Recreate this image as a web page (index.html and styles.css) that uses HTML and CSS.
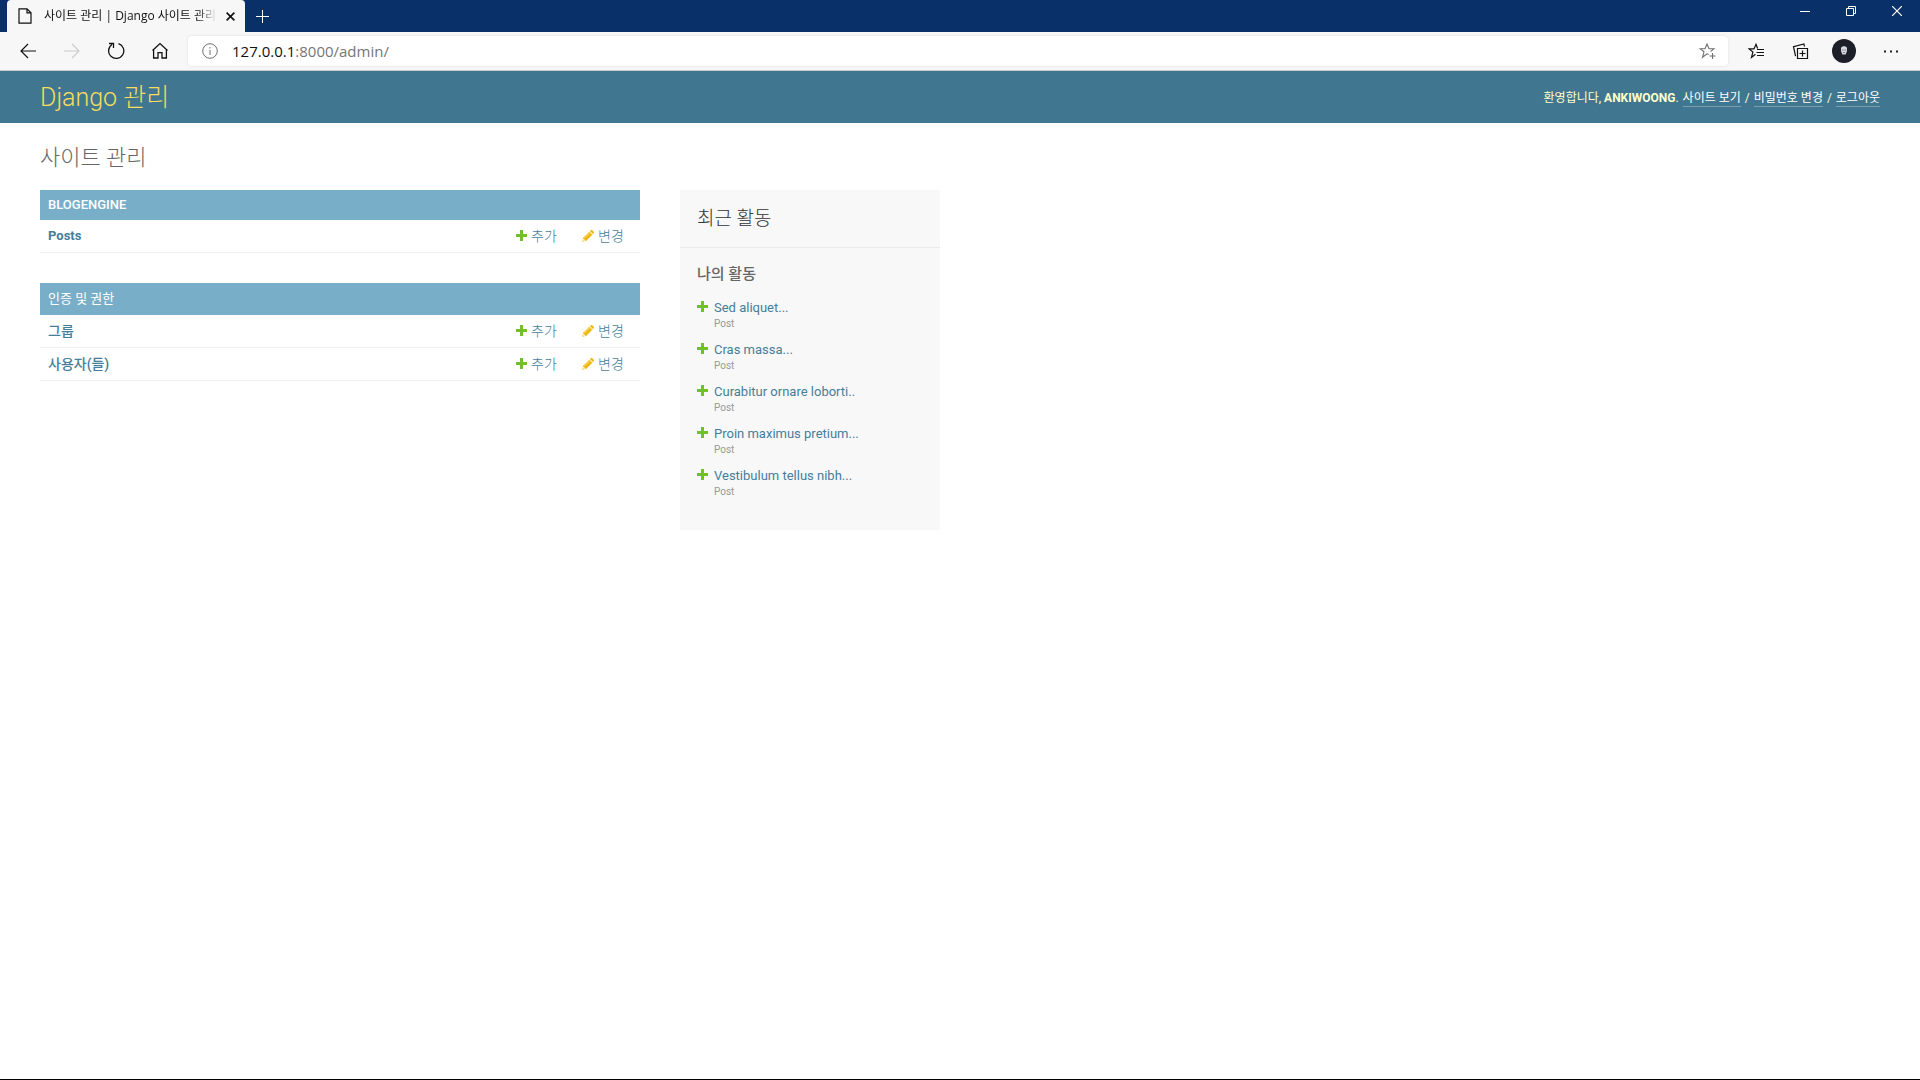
FILE: index.html
```html
<!DOCTYPE html>
<html lang="ko">
<head>
    <meta charset="UTF-8">
    <meta name="viewport" content="width=device-width, initial-scale=1.0">
    <title>사이트 관리 | Django 사이트 관리</title>
    <link rel="stylesheet" href="styles.css">
</head>
<body>
    <!-- icons used more than once -->
    <svg class="sprite" aria-hidden="true">
        <symbol id="icon-add" viewBox="0 0 11 11">
            <path fill="#70bf2b" d="M4 0h3v4h4v3H7v4H4V7H0V4h4z"/>
        </symbol>
        <symbol id="icon-change" viewBox="0 0 12 12">
            <path fill="#efb80b" d="M0.3 11.7l.9-4L7.5 1.4l3.1 3.1-6.3 6.3z"/>
            <path fill="#efb80b" d="M8.2.8C9-.1 10-.1 10.8.7l.6.6c.7.7.7 1.7-.1 2.4l-.3.3L7.9 1z"/>
            <path stroke="#fff" stroke-width=".7" d="M7.2 1.6l3.1 3.1"/>
            <path stroke="#fbe6a3" stroke-width="1" d="M2.4 7.9l4.7-4.7"/>
            <path fill="#fff" d="M1.4 8.600l2 2-1.600.4-.8-.8z"/>
        </symbol>
    </svg>

    <div class="browser">
        <div class="titlebar">
            <div class="tab">
                <svg class="tab-icon" width="14" height="16" viewBox="0 0 14 16" fill="none" stroke="#111" stroke-width="1.2"><path d="M1 .8h8l4 4v10.4H1zM9 .8v4h4"/></svg>
                <span class="tab-title">사이트 관리 | Django 사이트 관리</span>
                <button class="tab-close" aria-label="탭 닫기">
                    <svg width="9" height="9" viewBox="0 0 9 9" stroke="#111" stroke-width="1.6"><path d="M.6.6l7.8 7.8M8.4.6L.6 8.4"/></svg>
                </button>
            </div>
            <button class="new-tab" aria-label="새 탭">
                <svg width="13" height="13" viewBox="0 0 13 13" stroke="#fff"><path d="M6.5 0v13M0 6.5h13"/></svg>
            </button>
            <div class="window-controls">
                <button aria-label="최소화"><svg width="10" height="10" viewBox="0 0 10 10" stroke="#fff"><path d="M0 5.5h10"/></svg></button>
                <button aria-label="이전 크기로 복원"><svg width="10" height="10" viewBox="0 0 10 10" fill="none" stroke="#fff"><path d="M.5 2.5h7v7h-7zM2.5 2.5v-2h7v7h-2"/></svg></button>
                <button aria-label="닫기"><svg width="10" height="10" viewBox="0 0 10 10" stroke="#fff" stroke-width="1.2"><path d="M0 0l10 10M10 0L0 10"/></svg></button>
            </div>
        </div>

        <div class="toolbar">
            <button aria-label="뒤로"><svg width="18" height="18" viewBox="0 0 18 18" fill="none" stroke="#111" stroke-width="1.2"><path d="M17 9H2M9 2L2 9l7 7"/></svg></button>
            <button aria-label="앞으로" disabled><svg width="18" height="18" viewBox="0 0 18 18" fill="none" stroke="#ccc" stroke-width="1.2"><path d="M1 9h15M9 2l7 7-7 7"/></svg></button>
            <button aria-label="새로 고침"><svg width="18" height="18" viewBox="0 0 18 18" fill="none" stroke="#111" stroke-width="1.3"><path d="M11.5 1.6A7.6 7.6 0 1 1 5 2.500M2 1.500h4.500V6"/></svg></button>
            <button aria-label="홈"><svg width="18" height="18" viewBox="0 0 18 18" fill="none" stroke="#111" stroke-width="1.3"><path d="M2.6 7.5V16H7v-5.300h4V16h4.400V7.500M1.500 8.500L9 1.600l7.500 6.900"/></svg></button>

            <div class="address">
                <svg width="16" height="16" viewBox="0 0 16 16" fill="none" stroke="#707070"><circle cx="8" cy="8" r="7.3"/><path d="M8 7v5M8 4v1.5"/></svg>
                <label for="url">127.0.0.1</label>
                <input id="url" type="text" value=":8000/admin/">
                <button aria-label="즐겨찾기에 추가"><svg width="17" height="17" viewBox="0 0 17 17" fill="none" stroke="#707070" stroke-width="1.1"><path d="M9.7 11.600L8 10.800l-4.500 3.500 1.500-5.500L1 5.700h5L8 1l2 4.700h5l-3.500 3M13.500 10v6M10.500 13h6"/></svg></button>
            </div>

            <div class="tools">
                <button aria-label="즐겨찾기"><svg width="17" height="17" viewBox="0 0 17 17" fill="none" stroke="#111" stroke-width="1.2"><path d="M7.5 11.300L3.500 14.500 4.900 9 1 5.900h5L8 1.300l1.600 4.200M9 6.500h7M8.500 9.500H16M9 12.500h7"/></svg></button>
                <button aria-label="컬렉션"><svg width="17" height="17" viewBox="0 0 17 17" fill="none" stroke="#111" stroke-width="1.2"><path d="M5.500 5.500h10v10h-10zM10.500 7.500v6M7.500 10.500h6M12.500 3.500l-.6-2.500L1.500 3.600l2 9.500"/></svg></button>
                <button aria-label="프로필"><svg width="24" height="24" viewBox="0 0 24 24"><circle cx="12" cy="12" r="12" fill="#1c1f27"/><path fill="#d6d6dc" d="M9 9c.5-2.500 5.500-2.500 6 0v3l-1.300 3.500h-3.400L9 12z"/><path stroke="#777b85" d="M10 11h1.600M12.600 11h1.600M11 13.500h2"/></svg></button>
                <button aria-label="설정 및 기타"><svg width="14" height="3" viewBox="0 0 14 3" fill="#222"><path d="M0 .5h2v2H0zM6 .5h2v2H6zM12 .5h2v2h-2z"/></svg></button>
            </div>
        </div>
    </div>

    <header class="header">
        <a class="site-name" href="#">Django 관리</a>
        <div class="user-tools">
            환영합니다, <strong>ANKIWOONG</strong>.
            <a href="#">사이트 보기</a> /
            <a href="#">비밀번호 변경</a> /
            <a href="#">로그아웃</a>
        </div>
    </header>

    <main class="content">
        <h1>사이트 관리</h1>
        <div class="columns">
            <div class="app-list">
                <table class="module">
                    <caption><a href="#">BLOGENGINE</a></caption>
                    <tr>
                        <th scope="row"><a href="#">Posts</a></th>
                        <td><a href="#"><svg width="11" height="11"><use href="#icon-add"/></svg>추가</a></td>
                        <td><a href="#"><svg width="12" height="12"><use href="#icon-change"/></svg>변경</a></td>
                    </tr>
                </table>

                <table class="module auth">
                    <caption><a href="#">인증 및 권한</a></caption>
                    <tr>
                        <th scope="row"><a href="#">그룹</a></th>
                        <td><a href="#"><svg width="11" height="11"><use href="#icon-add"/></svg>추가</a></td>
                        <td><a href="#"><svg width="12" height="12"><use href="#icon-change"/></svg>변경</a></td>
                    </tr>
                    <tr>
                        <th scope="row"><a href="#">사용자(들)</a></th>
                        <td><a href="#"><svg width="11" height="11"><use href="#icon-add"/></svg>추가</a></td>
                        <td><a href="#"><svg width="12" height="12"><use href="#icon-change"/></svg>변경</a></td>
                    </tr>
                </table>
            </div>

            <aside class="recent">
                <h2>최근 활동</h2>
                <h3>나의 활동</h3>
                <ul>
                    <li><svg width="11" height="11"><use href="#icon-add"/></svg><a href="#">Sed aliquet...</a><small>Post</small></li>
                    <li><svg width="11" height="11"><use href="#icon-add"/></svg><a href="#">Cras massa...</a><small>Post</small></li>
                    <li><svg width="11" height="11"><use href="#icon-add"/></svg><a href="#">Curabitur ornare loborti..</a><small>Post</small></li>
                    <li><svg width="11" height="11"><use href="#icon-add"/></svg><a href="#">Proin maximus pretium...</a><small>Post</small></li>
                    <li><svg width="11" height="11"><use href="#icon-add"/></svg><a href="#">Vestibulum tellus nibh...</a><small>Post</small></li>
                </ul>
            </aside>
        </div>
    </main>
</body>
</html>
```

FILE: styles.css
```css
* {
    margin: 0;
    padding: 0;
    box-sizing: border-box;
}

body {
    display: flex;
    flex-direction: column;
    min-height: 100vh;
    background: #fff;
    border-bottom: 1px solid #000;
    color: #333;
    font-family: Roboto, "Noto Sans CJK KR", sans-serif;
    font-size: 13px;
    line-height: 20px;
}

a {
    color: #447e9b;
    text-decoration: none;
}

button {
    display: flex;
    align-items: center;
    justify-content: center;
    background: none;
    border: 0;
}

.sprite {
    position: absolute;
    width: 0;
    height: 0;
}

/* Browser frame */
.browser {
    font-family: "Open Sans", "Noto Sans CJK KR", sans-serif;
    border-bottom: 1px solid #ccc;
}

.titlebar {
    display: flex;
    height: 32px;
    padding-left: 7px;
    background: #0a3069;
}

.tab {
    display: flex;
    align-items: center;
    width: 238px;
    padding: 0 6px 0 11px;
    background: #f7f7f7;
    border-radius: 4px 4px 0 0;
}

.tab-title {
    flex: 1;
    margin-left: 12px;
    overflow: hidden;
    white-space: nowrap;
    font-size: 12px;
    color: #111;
    -webkit-mask-image: linear-gradient(to left, transparent, #000 20px);
    mask-image: linear-gradient(to left, transparent, #000 20px);
}

.tab-close {
    width: 18px;
    height: 18px;
    margin-left: 4px;
}

.new-tab {
    width: 35px;
}

.window-controls {
    display: flex;
    height: 22px;
    margin-left: auto;
}

.window-controls button {
    width: 46px;
}

.toolbar {
    display: flex;
    align-items: center;
    height: 38px;
    padding: 0 5px 0 6px;
    background: #f7f7f7;
}

.toolbar > button,
.tools button {
    width: 44px;
    height: 32px;
}

.address {
    display: flex;
    flex: 1;
    align-items: center;
    height: 30px;
    margin: 0 6px;
    padding: 0 12px 0 14px;
    background: #fff;
    border-radius: 4px;
    box-shadow: 0 0 3px rgba(0, 0, 0, 0.1);
    font-size: 15px;
}

.address label {
    margin-left: 14px;
    color: #111;
}

.address input {
    flex: 1;
    border: 0;
    outline: 0;
    background: none;
    color: #767676;
    font: inherit;
}

.tools {
    display: flex;
}

.tools button:last-child {
    width: 49px;
}

/* Header */
.header {
    display: flex;
    align-items: center;
    justify-content: space-between;
    height: 52px;
    padding: 2px 40px 0;
    background: #417690;
    color: #ffc;
}

.site-name {
    color: #f5dd5d;
    font-size: 25px;
    font-weight: 300;
    line-height: 28px;
}

.user-tools {
    font-size: 12px;
    line-height: 16px;
}

.user-tools a {
    display: inline-block;
    margin: 0 1px;
    border-bottom: 1px solid rgba(255, 255, 255, 0.3);
    color: #fff;
}

.user-tools a:last-child {
    margin-right: 0;
}

/* Content */
.content {
    padding: 20px 40px;
}

h1 {
    margin-bottom: 17px;
    color: #666;
    font-size: 22px;
    font-weight: 300;
    line-height: 30px;
}

.columns {
    display: flex;
    align-items: flex-start;
    gap: 40px;
}

.app-list {
    width: 600px;
}

.module {
    width: 100%;
    margin-bottom: 30px;
    border-spacing: 0;
}

.module caption {
    padding: 5px 8px;
    background: #79aec8;
    text-align: left;
    font-weight: 500;
}

.auth caption {
    padding: 6px 8px;
    font-weight: 400;
}

.module caption a {
    color: #fff;
}

.module th,
.module td {
    height: 33px;
    padding: 0 8px 1px;
    border-bottom: 1px solid #eee;
    text-align: left;
}

.module th {
    font-weight: bold;
}

.auth th {
    font-size: 14px;
    font-weight: 500;
}

.module td {
    width: 66px;
    font-size: 14px;
    font-weight: 300;
}

.module td a {
    display: flex;
    align-items: center;
    gap: 4px;
    white-space: nowrap;
}

.recent {
    width: 260px;
    padding-bottom: 26px;
    background: #f8f8f8;
}

.recent h2 {
    padding: 14px 17px;
    border-bottom: 1px solid #eaeaea;
    font-size: 19px;
    font-weight: 300;
    line-height: 29px;
}

.recent h3 {
    padding: 16px 17px 10px;
    color: #666;
    font-size: 15px;
    font-weight: 500;
    line-height: 20px;
}

.recent ul {
    padding: 0 17px;
    list-style: none;
}

.recent li {
    display: grid;
    grid-template-columns: 17px 1fr;
    padding: 5px 0;
    line-height: 18px;
}

.recent li svg {
    margin-top: 2px;
}

.recent small {
    grid-column: 2;
    color: #999;
    font-size: 10px;
    line-height: 14px;
}
```
